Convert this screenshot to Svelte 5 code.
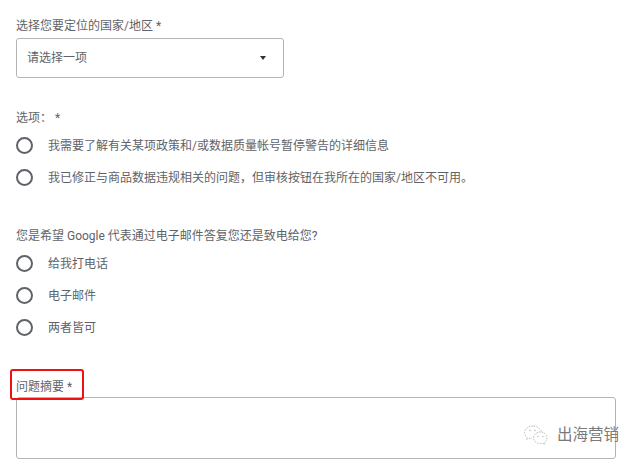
<script lang="ts">
    const options = [
        "我需要了解有关某项政策和/或数据质量帐号暂停警告的详细信息",
        "我已修正与商品数据违规相关的问题，但审核按钮在我所在的国家/地区不可用。",
    ];
    const contact = ["给我打电话", "电子邮件", "两者皆可"];
</script>

<main>
    <section class="country">
        <p class="label">选择您要定位的国家/地区 *</p>
        <div class="select">
            <span>请选择一项</span>
            <i class="arrow"></i>
        </div>
    </section>

    <section class="opts">
        <p class="label">选项： *</p>
        <ul>
            {#each options as option}
                <li><i class="radio"></i><span>{option}</span></li>
            {/each}
        </ul>
    </section>

    <section class="reply">
        <p class="label">您是希望 Google 代表通过电子邮件答复您还是致电给您?</p>
        <ul>
            {#each contact as option}
                <li><i class="radio"></i><span>{option}</span></li>
            {/each}
        </ul>
    </section>

    <section class="summary">
        <p class="label marked">问题摘要 *</p>
        <div class="textarea"></div>
    </section>

    <div class="mark">
        <svg width="28" height="22" viewBox="0 0 28 22" fill="none" stroke="#bdbdbd" stroke-width="1" stroke-dasharray="1.6 1.2">
            <path d="M11 2c-5 0-8.500 3-8.500 6.500 0 2 1 3.500 2.500 4.700l-.6 2.300 2.700-1.300c1 .3 2 .5 3 .5" />
            <path d="M19.500 7.500c-1.500-3.300-5-5.500-8.500-5.500" />
            <path d="M18.500 8c-4 0-7 2.700-7 5.800s3 5.800 7 5.800c.8 0 1.600-.1 2.300-.4l2.300 1.200-.5-2c1.500-1.100 2.400-2.800 2.400-4.600 0-3.100-3-5.800-6.500-5.800z" />
            <circle cx="8" cy="6.500" r=".8" fill="#bdbdbd" stroke="none" />
            <circle cx="13" cy="6.500" r=".8" fill="#bdbdbd" stroke="none" />
            <circle cx="16" cy="12.500" r=".7" fill="#bdbdbd" stroke="none" />
            <circle cx="21" cy="12.500" r=".7" fill="#bdbdbd" stroke="none" />
        </svg>
        <span>出海营销</span>
    </div>
</main>

<style>
    :global(body) {
        margin: 0;
        background: #fff;
    }

    main {
        position: relative;
        width: 640px;
        height: 462px;
        overflow: hidden;
        box-sizing: border-box;
        padding: 18px 24px 0 16px;
        font-family: Roboto, "Noto Sans CJK SC", sans-serif;
        font-size: 12px;
        line-height: 16px;
        color: #5f6368;
    }

    p {
        margin: 0;
    }

    ul {
        list-style: none;
        margin: 0;
        padding: 0;
    }

    li {
        display: flex;
        align-items: center;
        gap: 15px;
        height: 32px;
    }

    li span {
        padding-top: 2px;
    }

    .select {
        display: flex;
        align-items: center;
        justify-content: space-between;
        box-sizing: border-box;
        width: 268px;
        height: 40px;
        margin-top: 4px;
        padding: 0 17px 0 10px;
        border: 1px solid #b4b4b4;
        border-radius: 3px;
    }

    .arrow {
        width: 0;
        height: 0;
        border: 3.5px solid transparent;
        border-top: 4px solid #333;
        border-bottom: 0;
    }

    .opts {
        margin-top: 32px;
    }

    .opts ul,
    .reply ul {
        margin-top: 3px;
    }

    .radio {
        flex: none;
        box-sizing: border-box;
        width: 17px;
        height: 17px;
        border: 2px solid #5f6368;
        border-radius: 50%;
    }

    .reply {
        margin-top: 35px;
    }

    .summary {
        margin-top: 36px;
    }

    .marked {
        position: relative;
        width: max-content;
    }

    .marked::after {
        content: "";
        position: absolute;
        inset: -10px -12px -5px -6px;
        border: 2px solid #f01010;
        border-radius: 3px;
    }

    .textarea {
        box-sizing: border-box;
        height: 62px;
        margin-top: 2px;
        border: 1px solid #b4b4b4;
        border-radius: 3px;
    }

    .mark {
        position: absolute;
        right: 21px;
        bottom: 16px;
        display: flex;
        align-items: center;
        gap: 7px;
        font-size: 15.5px;
        color: #7a7a7a;
    }
</style>
